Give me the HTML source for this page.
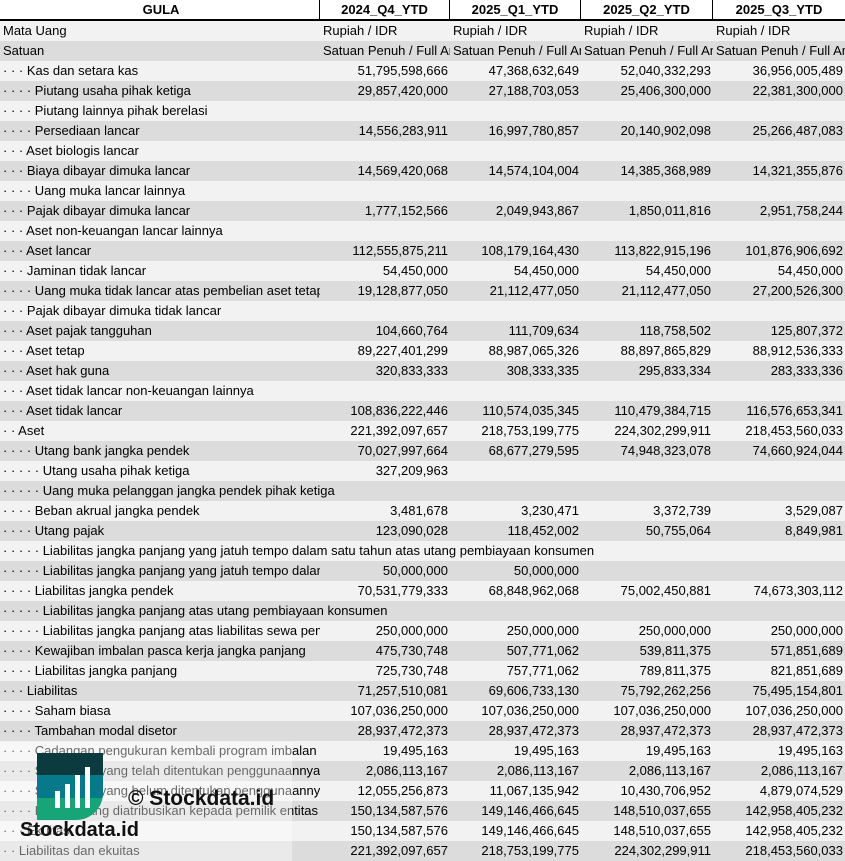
<!DOCTYPE html>
<html><head><meta charset="utf-8"><style>
*{margin:0;padding:0;box-sizing:border-box}
body{width:845px;height:861px;overflow:hidden;background:#fff;font-family:"Liberation Sans",sans-serif;font-size:13px;color:#000;position:relative}
.r{display:flex;height:20px;line-height:20px;white-space:nowrap}
.r div{overflow:hidden}
.r>div:nth-child(1){width:320px;padding-left:3px}
.r>div:nth-child(2){width:130px}
.r>div:nth-child(3){width:131px}
.r>div:nth-child(4){width:132px}
.r>div:nth-child(5){width:132px}
.r>div.n{text-align:right;padding-right:2px}
.r>div.t{padding-left:3px}
.h{height:21px;border-bottom:2px solid #000;font-weight:bold;line-height:20px}
.h div{text-align:center;border-right:1px solid #000}
.h div:last-child{border-right:none}
.r.l{background:#f2f2f2}
.r.d{background:#dcdcdc}
.ov{position:absolute;left:0;top:742px;width:292px;height:119px;background:rgba(255,255,255,.4)}
</style></head><body>
<div class="r h"><div>GULA</div><div>2024_Q4_YTD</div><div>2025_Q1_YTD</div><div>2025_Q2_YTD</div><div>2025_Q3_YTD</div></div>
<div class="r l"><div>Mata Uang</div><div class="t">Rupiah / IDR</div><div class="t">Rupiah / IDR</div><div class="t">Rupiah / IDR</div><div class="t">Rupiah / IDR</div></div>
<div class="r d"><div>Satuan</div><div class="t">Satuan Penuh / Full Amount</div><div class="t">Satuan Penuh / Full Amount</div><div class="t">Satuan Penuh / Full Amount</div><div class="t">Satuan Penuh / Full Amount</div></div>
<div class="r l"><div>· · · Kas dan setara kas</div><div class="n">51,795,598,666</div><div class="n">47,368,632,649</div><div class="n">52,040,332,293</div><div class="n">36,956,005,489</div></div>
<div class="r d"><div>· · · · Piutang usaha pihak ketiga</div><div class="n">29,857,420,000</div><div class="n">27,188,703,053</div><div class="n">25,406,300,000</div><div class="n">22,381,300,000</div></div>
<div class="r l"><div>· · · · Piutang lainnya pihak berelasi</div><div class="n"></div><div class="n"></div><div class="n"></div><div class="n"></div></div>
<div class="r d"><div>· · · · Persediaan lancar</div><div class="n">14,556,283,911</div><div class="n">16,997,780,857</div><div class="n">20,140,902,098</div><div class="n">25,266,487,083</div></div>
<div class="r l"><div>· · · Aset biologis lancar</div><div class="n"></div><div class="n"></div><div class="n"></div><div class="n"></div></div>
<div class="r d"><div>· · · Biaya dibayar dimuka lancar</div><div class="n">14,569,420,068</div><div class="n">14,574,104,004</div><div class="n">14,385,368,989</div><div class="n">14,321,355,876</div></div>
<div class="r l"><div>· · · · Uang muka lancar lainnya</div><div class="n"></div><div class="n"></div><div class="n"></div><div class="n"></div></div>
<div class="r d"><div>· · · Pajak dibayar dimuka lancar</div><div class="n">1,777,152,566</div><div class="n">2,049,943,867</div><div class="n">1,850,011,816</div><div class="n">2,951,758,244</div></div>
<div class="r l"><div>· · · Aset non-keuangan lancar lainnya</div><div class="n"></div><div class="n"></div><div class="n"></div><div class="n"></div></div>
<div class="r d"><div>· · · Aset lancar</div><div class="n">112,555,875,211</div><div class="n">108,179,164,430</div><div class="n">113,822,915,196</div><div class="n">101,876,906,692</div></div>
<div class="r l"><div>· · · Jaminan tidak lancar</div><div class="n">54,450,000</div><div class="n">54,450,000</div><div class="n">54,450,000</div><div class="n">54,450,000</div></div>
<div class="r d"><div>· · · · Uang muka tidak lancar atas pembelian aset tetap</div><div class="n">19,128,877,050</div><div class="n">21,112,477,050</div><div class="n">21,112,477,050</div><div class="n">27,200,526,300</div></div>
<div class="r l"><div>· · · Pajak dibayar dimuka tidak lancar</div><div class="n"></div><div class="n"></div><div class="n"></div><div class="n"></div></div>
<div class="r d"><div>· · · Aset pajak tangguhan</div><div class="n">104,660,764</div><div class="n">111,709,634</div><div class="n">118,758,502</div><div class="n">125,807,372</div></div>
<div class="r l"><div>· · · Aset tetap</div><div class="n">89,227,401,299</div><div class="n">88,987,065,326</div><div class="n">88,897,865,829</div><div class="n">88,912,536,333</div></div>
<div class="r d"><div>· · · Aset hak guna</div><div class="n">320,833,333</div><div class="n">308,333,335</div><div class="n">295,833,334</div><div class="n">283,333,336</div></div>
<div class="r l"><div>· · · Aset tidak lancar non-keuangan lainnya</div><div class="n"></div><div class="n"></div><div class="n"></div><div class="n"></div></div>
<div class="r d"><div>· · · Aset tidak lancar</div><div class="n">108,836,222,446</div><div class="n">110,574,035,345</div><div class="n">110,479,384,715</div><div class="n">116,576,653,341</div></div>
<div class="r l"><div>· · Aset</div><div class="n">221,392,097,657</div><div class="n">218,753,199,775</div><div class="n">224,302,299,911</div><div class="n">218,453,560,033</div></div>
<div class="r d"><div>· · · · Utang bank jangka pendek</div><div class="n">70,027,997,664</div><div class="n">68,677,279,595</div><div class="n">74,948,323,078</div><div class="n">74,660,924,044</div></div>
<div class="r l"><div>· · · · · Utang usaha pihak ketiga</div><div class="n">327,209,963</div><div class="n"></div><div class="n"></div><div class="n"></div></div>
<div class="r d"><div style="overflow:visible;position:relative;z-index:1">· · · · · Uang muka pelanggan jangka pendek pihak ketiga</div><div class="n"></div><div class="n"></div><div class="n"></div><div class="n"></div></div>
<div class="r l"><div>· · · · Beban akrual jangka pendek</div><div class="n">3,481,678</div><div class="n">3,230,471</div><div class="n">3,372,739</div><div class="n">3,529,087</div></div>
<div class="r d"><div>· · · · Utang pajak</div><div class="n">123,090,028</div><div class="n">118,452,002</div><div class="n">50,755,064</div><div class="n">8,849,981</div></div>
<div class="r l"><div style="overflow:visible;position:relative;z-index:1">· · · · · Liabilitas jangka panjang yang jatuh tempo dalam satu tahun atas utang pembiayaan konsumen</div><div class="n"></div><div class="n"></div><div class="n"></div><div class="n"></div></div>
<div class="r d"><div>· · · · · Liabilitas jangka panjang yang jatuh tempo dalam satu tahun</div><div class="n">50,000,000</div><div class="n">50,000,000</div><div class="n"></div><div class="n"></div></div>
<div class="r l"><div>· · · · Liabilitas jangka pendek</div><div class="n">70,531,779,333</div><div class="n">68,848,962,068</div><div class="n">75,002,450,881</div><div class="n">74,673,303,112</div></div>
<div class="r d"><div style="overflow:visible;position:relative;z-index:1">· · · · · Liabilitas jangka panjang atas utang pembiayaan konsumen</div><div class="n"></div><div class="n"></div><div class="n"></div><div class="n"></div></div>
<div class="r l"><div>· · · · · Liabilitas jangka panjang atas liabilitas sewa pembiayaan</div><div class="n">250,000,000</div><div class="n">250,000,000</div><div class="n">250,000,000</div><div class="n">250,000,000</div></div>
<div class="r d"><div>· · · · Kewajiban imbalan pasca kerja jangka panjang</div><div class="n">475,730,748</div><div class="n">507,771,062</div><div class="n">539,811,375</div><div class="n">571,851,689</div></div>
<div class="r l"><div>· · · · Liabilitas jangka panjang</div><div class="n">725,730,748</div><div class="n">757,771,062</div><div class="n">789,811,375</div><div class="n">821,851,689</div></div>
<div class="r d"><div>· · · Liabilitas</div><div class="n">71,257,510,081</div><div class="n">69,606,733,130</div><div class="n">75,792,262,256</div><div class="n">75,495,154,801</div></div>
<div class="r l"><div>· · · · Saham biasa</div><div class="n">107,036,250,000</div><div class="n">107,036,250,000</div><div class="n">107,036,250,000</div><div class="n">107,036,250,000</div></div>
<div class="r d"><div>· · · · Tambahan modal disetor</div><div class="n">28,937,472,373</div><div class="n">28,937,472,373</div><div class="n">28,937,472,373</div><div class="n">28,937,472,373</div></div>
<div class="r l"><div>· · · · Cadangan pengukuran kembali program imbalan pasti</div><div class="n">19,495,163</div><div class="n">19,495,163</div><div class="n">19,495,163</div><div class="n">19,495,163</div></div>
<div class="r d"><div>· · · · Saldo laba yang telah ditentukan penggunaannya</div><div class="n">2,086,113,167</div><div class="n">2,086,113,167</div><div class="n">2,086,113,167</div><div class="n">2,086,113,167</div></div>
<div class="r l"><div>· · · · Saldo laba yang belum ditentukan penggunaannya</div><div class="n">12,055,256,873</div><div class="n">11,067,135,942</div><div class="n">10,430,706,952</div><div class="n">4,879,074,529</div></div>
<div class="r d"><div>· · · · Ekuitas yang diatribusikan kepada pemilik entitas induk</div><div class="n">150,134,587,576</div><div class="n">149,146,466,645</div><div class="n">148,510,037,655</div><div class="n">142,958,405,232</div></div>
<div class="r l"><div>· · · Ekuitas</div><div class="n">150,134,587,576</div><div class="n">149,146,466,645</div><div class="n">148,510,037,655</div><div class="n">142,958,405,232</div></div>
<div class="r d"><div>· · Liabilitas dan ekuitas</div><div class="n">221,392,097,657</div><div class="n">218,753,199,775</div><div class="n">224,302,299,911</div><div class="n">218,453,560,033</div></div>
<div class="ov"></div>
<svg style="position:absolute;left:37px;top:753px" width="66" height="67" viewBox="0 0 66 67">
<defs><clipPath id="c"><path d="M0 0H66V40A27 27 0 0 1 39 67H0Z"/></clipPath></defs>
<g clip-path="url(#c)"><rect width="66" height="22" fill="#0c3b3f"/><rect y="22" width="66" height="23" fill="#067a8a"/><rect y="45" width="66" height="22" fill="#17a477"/></g>
<rect x="18" y="38" width="5" height="17" fill="#fff"/><rect x="28" y="31" width="5" height="24" fill="#fff"/><rect x="38" y="22" width="5" height="33" fill="#fff"/><rect x="48" y="14" width="5" height="41" fill="#fff"/>
</svg>
<div style="position:absolute;left:128px;top:787px;font-size:21px;font-weight:bold;color:#111">© Stockdata.id</div>
<div style="position:absolute;left:20px;top:819px;font-size:20px;font-weight:bold;color:#111">Stockdata.id</div>
</body></html>
